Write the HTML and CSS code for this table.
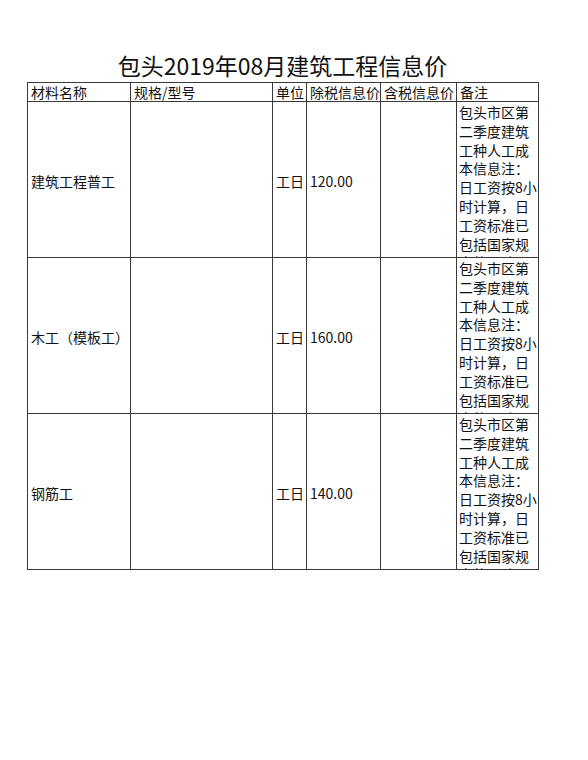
FILE: index.html
```html
<!DOCTYPE html>
<html lang="zh">
<head>
<meta charset="utf-8">
<title>包头2019年08月建筑工程信息价</title>
<link rel="stylesheet" href="styles.css">
</head>
<body>
<div class="sheet">
  <h1 class="title">包头2019年08月建筑工程信息价</h1>
  <table class="grid">
    <colgroup>
      <col class="c-name">
      <col class="c-spec">
      <col class="c-unit">
      <col class="c-ex">
      <col class="c-in">
      <col class="c-note">
    </colgroup>
    <thead>
      <tr class="head">
        <td>材料名称</td>
        <td>规格/型号</td>
        <td>单位</td>
        <td>除税信息价</td>
        <td>含税信息价</td>
        <td>备注</td>
      </tr>
    </thead>
    <tbody>
      <tr class="data">
        <td>建筑工程普工</td>
        <td></td>
        <td>工日</td>
        <td>120.00</td>
        <td></td>
        <td class="note"><div class="note-box">包头市区第二季度建筑工种人工成本信息注：日工资按8小时计算，日工资标准已包括国家规定的五险一金</div></td>
      </tr>
      <tr class="data">
        <td>木工（模板工）</td>
        <td></td>
        <td>工日</td>
        <td>160.00</td>
        <td></td>
        <td class="note"><div class="note-box">包头市区第二季度建筑工种人工成本信息注：日工资按8小时计算，日工资标准已包括国家规定的五险一金</div></td>
      </tr>
      <tr class="data">
        <td>钢筋工</td>
        <td></td>
        <td>工日</td>
        <td>140.00</td>
        <td></td>
        <td class="note"><div class="note-box">包头市区第二季度建筑工种人工成本信息注：日工资按8小时计算，日工资标准已包括国家规定的五险一金</div></td>
      </tr>
    </tbody>
  </table>
</div>
</body>
</html>
```
FILE: styles.css
```css
html, body {
  margin: 0;
  padding: 0;
  background: #ffffff;
}
body {
  font-family: "Noto Sans CJK SC", "Noto Sans", sans-serif;
  color: #111111;
}
.sheet {
  padding: 49px 0 0 27px;
  width: 511px;
}
.title {
  margin: 0;
  font-size: 23px;
  font-weight: normal;
  line-height: 33px;
  height: 33px;
  text-align: center;
  color: #111111;
}
.grid {
  border-collapse: collapse;
  table-layout: fixed;
  width: 511px;
  font-size: 14px;
  line-height: 18px;
}
.c-name { width: 103px; }
.c-spec { width: 142px; }
.c-unit { width: 34px; }
.c-ex { width: 74px; }
.c-in { width: 76px; }
.c-note { width: 82px; }
.grid td {
  border: 1px solid #3a3a3a;
  padding: 0 2px 0 3px;
  white-space: nowrap;
  overflow: hidden;
  vertical-align: middle;
}
.head td {
  height: 18px;
}
.data td {
  height: 153px;
  padding-top: 2px;
}
.data td.note {
  vertical-align: top;
  white-space: normal;
  padding: 0 1px 0 2px;
}
.note-box {
  height: 155px;
  overflow: hidden;
  padding-top: 1px;
  box-sizing: border-box;
  line-height: 18.8px;
  word-break: break-all;
}
```
